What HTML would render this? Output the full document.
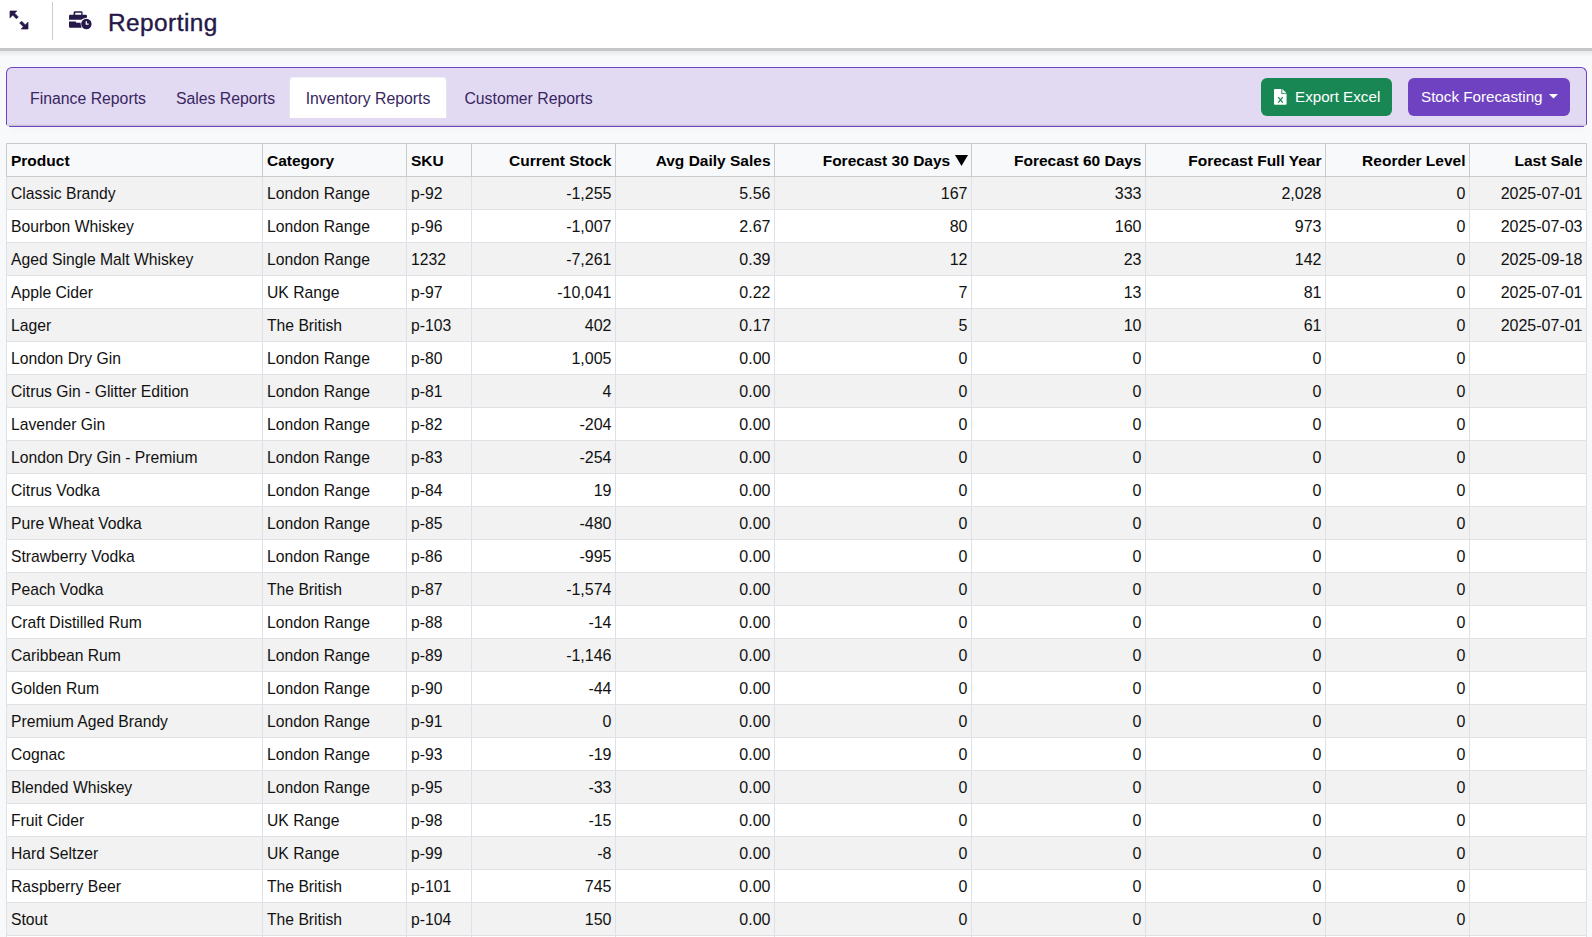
<!DOCTYPE html>
<html><head><meta charset="utf-8">
<style>
*{box-sizing:border-box;margin:0;padding:0}
html,body{width:1592px;height:937px;overflow:hidden}
body{background:#f8f9fa;font-family:"Liberation Sans",sans-serif;color:#212529;position:relative}
.topbar{position:absolute;left:0;top:0;width:1592px;height:51px;background:#fff;border-bottom:3px solid #c4c7ca}
.topshadow{position:absolute;left:0;top:51px;width:1592px;height:6px;background:linear-gradient(#e8e9eb,#f8f9fa)}
.sep{position:absolute;left:52px;top:2px;width:1px;height:38px;background:#cdc8d8}
.title{position:absolute;left:108px;top:7px;font-size:24.4px;letter-spacing:0.45px;line-height:32px;color:#261848;-webkit-text-stroke:0.4px #261848;white-space:nowrap}
.tabbar{position:absolute;left:6px;top:67px;width:1581px;height:58px;background:#e2d9f3;border:1px solid #6f42c1;border-bottom:none;border-radius:6px 6px 1px 1px}
.tbline{position:absolute;left:7px;top:124px;width:1579px;height:2px;background:linear-gradient(#e2d9f3,#c2bdc9)}
.tbbot{position:absolute;left:9px;top:126px;width:1575px;height:1px;background:#6f42c1;border-radius:1px;box-shadow:0 2px 5px rgba(0,0,0,.09)}
.tab{position:absolute;top:9px;height:41px;font-size:15.8px;line-height:43px;color:#38265f;white-space:nowrap;text-align:center}
.tab.active{background:#fff;border-radius:4px 4px 0 0;border:1px solid #e3e5e8;border-top-color:#f4f4f6;border-bottom:none;line-height:41px}
.btn{position:absolute;top:10px;height:38px;border-radius:6px;color:#fff;font-size:15.2px;line-height:38px;white-space:nowrap}
.btn.green{left:1254px;width:131px;background:#198754}
.btn.purple{left:1401px;width:162px;background:#6f42c1}
.table{position:absolute;left:6px;top:143px;width:1581px}
.tr{display:flex;height:33px;border-bottom:1px solid #dee2e6;background:#fff}
.tr.odd{background:#f2f2f2}
.th{display:flex;height:34px;border-top:1px solid #c9cbcd;border-bottom:1px solid #c9cbcd;background:#f8f9fa}
.c{height:32px;border-left:1px solid #dee2e6;padding:4px 4px 0 4px;font-size:15.7px;line-height:25px;white-space:nowrap;overflow:hidden;color:#111}
.th .c{height:32px;border-left:1px solid #c9cbcd;font-weight:bold;font-size:15.5px;color:#000}
.c.r{text-align:right;font-size:16px;padding-right:3.5px}
.th .c.r{font-size:15.5px}
.c.last{border-right:1px solid #dee2e6}
.th .c.last{border-right:1px solid #c9cbcd}
.sort{vertical-align:0px}
</style></head><body>
<div class="topbar">
<svg style="position:absolute;left:0;top:0" width="40" height="40" viewBox="0 0 40 40">
<path fill="#261848" stroke="#261848" stroke-width="0.7" stroke-linejoin="round" d="M10,11 L16.8,11 L14.6,13.2 L18.3,16.9 L16.4,18.8 L12.7,15.1 L10,17.8 Z M28,29 L21.2,29 L23.4,26.8 L19.7,23.1 L21.6,21.2 L25.3,24.9 L28,22.2 Z"/>
</svg>
<div class="sep"></div>
<svg style="position:absolute;left:60px;top:0" width="40" height="40" viewBox="60 0 40 40">
<path fill="#261848" d="M73.6,14.7 L73.6,12.5 Q73.6,11.2 75,11.2 L81.3,11.2 Q82.6,11.2 82.6,12.5 L82.6,14.7 L81.3,14.7 L81.3,12.8 L75.2,12.8 L75.2,14.7 Z M70.2,14.7 L85.8,14.7 Q87,14.7 87,16 L87,17.4 Q83,18.2 81.2,19.8 L69,19.8 L69,16 Q69,14.7 70.2,14.7 Z M69,21.4 L75.6,21.4 L76.4,22.8 L80.6,22.8 Q80.6,25.6 81.6,27.8 L70.2,27.8 Q69,27.8 69,26.6 Z"/>
<circle cx="86.4" cy="24" r="5.2" fill="#261848"/>
<path d="M86.3,21.3 L86.3,24.2 L88.6,24.2" stroke="#fff" stroke-width="1.3" fill="none"/>
</svg>
<div class="title">Reporting</div>
</div>
<div class="topshadow"></div>
<div class="tabbar">
<div class="tab" style="left:9px;width:144px">Finance Reports</div>
<div class="tab" style="left:155px;width:127px">Sales Reports</div>
<div class="tab active" style="left:282px;width:158px">Inventory Reports</div>
<div class="tab" style="left:442px;width:159px">Customer Reports</div>
<div class="btn green">
<svg style="position:absolute;left:13px;top:11px" width="13" height="16" viewBox="0 0 13 16"><path fill="#fff" d="M0,1 Q0,0 1,0 L7.4,0 L7.4,5.1 L12.6,5.1 L12.6,14.8 Q12.6,15.8 11.6,15.8 L1,15.8 Q0,15.8 0,14.8 Z M8.3,0 L12.6,4.3 L8.3,4.3 Z"/><path d="M4.2,8.2 L8.8,13.6 M8.8,8.2 L4.2,13.6" stroke="#198754" stroke-width="1.3"/></svg>
<span style="position:absolute;left:34px;top:0">Export Excel</span>
</div>
<div class="btn purple">
<span style="position:absolute;left:13px;top:0">Stock Forecasting</span>
<svg style="position:absolute;left:141px;top:16px" width="9" height="5" viewBox="0 0 9 5"><path fill="#fff" d="M0,0 L9,0 L4.5,4.5 Z"/></svg>
</div>
</div>
<div class="tbline"></div><div class="tbbot"></div>
<div class="table">
<div class="th"><div class="c l" style="width:256px">Product</div><div class="c l" style="width:144px">Category</div><div class="c l" style="width:65px">SKU</div><div class="c r" style="width:144px">Current Stock</div><div class="c r" style="width:159px">Avg Daily Sales</div><div class="c r" style="width:197px">Forecast 30 Days <svg class="sort" width="13" height="11" viewBox="0 0 13 11"><path d="M0,0 L13,0 L6.5,11 Z" fill="#000"/></svg></div><div class="c r" style="width:174px">Forecast 60 Days</div><div class="c r" style="width:180px">Forecast Full Year</div><div class="c r" style="width:144px">Reorder Level</div><div class="c r last" style="width:118px">Last Sale</div></div>
<div class="tr odd"><div class="c l" style="width:256px">Classic Brandy</div><div class="c l" style="width:144px">London Range</div><div class="c l" style="width:65px">p-92</div><div class="c r" style="width:144px">-1,255</div><div class="c r" style="width:159px">5.56</div><div class="c r" style="width:197px">167</div><div class="c r" style="width:174px">333</div><div class="c r" style="width:180px">2,028</div><div class="c r" style="width:144px">0</div><div class="c r last" style="width:118px">2025-07-01</div></div><div class="tr"><div class="c l" style="width:256px">Bourbon Whiskey</div><div class="c l" style="width:144px">London Range</div><div class="c l" style="width:65px">p-96</div><div class="c r" style="width:144px">-1,007</div><div class="c r" style="width:159px">2.67</div><div class="c r" style="width:197px">80</div><div class="c r" style="width:174px">160</div><div class="c r" style="width:180px">973</div><div class="c r" style="width:144px">0</div><div class="c r last" style="width:118px">2025-07-03</div></div><div class="tr odd"><div class="c l" style="width:256px">Aged Single Malt Whiskey</div><div class="c l" style="width:144px">London Range</div><div class="c l" style="width:65px">1232</div><div class="c r" style="width:144px">-7,261</div><div class="c r" style="width:159px">0.39</div><div class="c r" style="width:197px">12</div><div class="c r" style="width:174px">23</div><div class="c r" style="width:180px">142</div><div class="c r" style="width:144px">0</div><div class="c r last" style="width:118px">2025-09-18</div></div><div class="tr"><div class="c l" style="width:256px">Apple Cider</div><div class="c l" style="width:144px">UK Range</div><div class="c l" style="width:65px">p-97</div><div class="c r" style="width:144px">-10,041</div><div class="c r" style="width:159px">0.22</div><div class="c r" style="width:197px">7</div><div class="c r" style="width:174px">13</div><div class="c r" style="width:180px">81</div><div class="c r" style="width:144px">0</div><div class="c r last" style="width:118px">2025-07-01</div></div><div class="tr odd"><div class="c l" style="width:256px">Lager</div><div class="c l" style="width:144px">The British</div><div class="c l" style="width:65px">p-103</div><div class="c r" style="width:144px">402</div><div class="c r" style="width:159px">0.17</div><div class="c r" style="width:197px">5</div><div class="c r" style="width:174px">10</div><div class="c r" style="width:180px">61</div><div class="c r" style="width:144px">0</div><div class="c r last" style="width:118px">2025-07-01</div></div><div class="tr"><div class="c l" style="width:256px">London Dry Gin</div><div class="c l" style="width:144px">London Range</div><div class="c l" style="width:65px">p-80</div><div class="c r" style="width:144px">1,005</div><div class="c r" style="width:159px">0.00</div><div class="c r" style="width:197px">0</div><div class="c r" style="width:174px">0</div><div class="c r" style="width:180px">0</div><div class="c r" style="width:144px">0</div><div class="c r last" style="width:118px"></div></div><div class="tr odd"><div class="c l" style="width:256px">Citrus Gin - Glitter Edition</div><div class="c l" style="width:144px">London Range</div><div class="c l" style="width:65px">p-81</div><div class="c r" style="width:144px">4</div><div class="c r" style="width:159px">0.00</div><div class="c r" style="width:197px">0</div><div class="c r" style="width:174px">0</div><div class="c r" style="width:180px">0</div><div class="c r" style="width:144px">0</div><div class="c r last" style="width:118px"></div></div><div class="tr"><div class="c l" style="width:256px">Lavender Gin</div><div class="c l" style="width:144px">London Range</div><div class="c l" style="width:65px">p-82</div><div class="c r" style="width:144px">-204</div><div class="c r" style="width:159px">0.00</div><div class="c r" style="width:197px">0</div><div class="c r" style="width:174px">0</div><div class="c r" style="width:180px">0</div><div class="c r" style="width:144px">0</div><div class="c r last" style="width:118px"></div></div><div class="tr odd"><div class="c l" style="width:256px">London Dry Gin - Premium</div><div class="c l" style="width:144px">London Range</div><div class="c l" style="width:65px">p-83</div><div class="c r" style="width:144px">-254</div><div class="c r" style="width:159px">0.00</div><div class="c r" style="width:197px">0</div><div class="c r" style="width:174px">0</div><div class="c r" style="width:180px">0</div><div class="c r" style="width:144px">0</div><div class="c r last" style="width:118px"></div></div><div class="tr"><div class="c l" style="width:256px">Citrus Vodka</div><div class="c l" style="width:144px">London Range</div><div class="c l" style="width:65px">p-84</div><div class="c r" style="width:144px">19</div><div class="c r" style="width:159px">0.00</div><div class="c r" style="width:197px">0</div><div class="c r" style="width:174px">0</div><div class="c r" style="width:180px">0</div><div class="c r" style="width:144px">0</div><div class="c r last" style="width:118px"></div></div><div class="tr odd"><div class="c l" style="width:256px">Pure Wheat Vodka</div><div class="c l" style="width:144px">London Range</div><div class="c l" style="width:65px">p-85</div><div class="c r" style="width:144px">-480</div><div class="c r" style="width:159px">0.00</div><div class="c r" style="width:197px">0</div><div class="c r" style="width:174px">0</div><div class="c r" style="width:180px">0</div><div class="c r" style="width:144px">0</div><div class="c r last" style="width:118px"></div></div><div class="tr"><div class="c l" style="width:256px">Strawberry Vodka</div><div class="c l" style="width:144px">London Range</div><div class="c l" style="width:65px">p-86</div><div class="c r" style="width:144px">-995</div><div class="c r" style="width:159px">0.00</div><div class="c r" style="width:197px">0</div><div class="c r" style="width:174px">0</div><div class="c r" style="width:180px">0</div><div class="c r" style="width:144px">0</div><div class="c r last" style="width:118px"></div></div><div class="tr odd"><div class="c l" style="width:256px">Peach Vodka</div><div class="c l" style="width:144px">The British</div><div class="c l" style="width:65px">p-87</div><div class="c r" style="width:144px">-1,574</div><div class="c r" style="width:159px">0.00</div><div class="c r" style="width:197px">0</div><div class="c r" style="width:174px">0</div><div class="c r" style="width:180px">0</div><div class="c r" style="width:144px">0</div><div class="c r last" style="width:118px"></div></div><div class="tr"><div class="c l" style="width:256px">Craft Distilled Rum</div><div class="c l" style="width:144px">London Range</div><div class="c l" style="width:65px">p-88</div><div class="c r" style="width:144px">-14</div><div class="c r" style="width:159px">0.00</div><div class="c r" style="width:197px">0</div><div class="c r" style="width:174px">0</div><div class="c r" style="width:180px">0</div><div class="c r" style="width:144px">0</div><div class="c r last" style="width:118px"></div></div><div class="tr odd"><div class="c l" style="width:256px">Caribbean Rum</div><div class="c l" style="width:144px">London Range</div><div class="c l" style="width:65px">p-89</div><div class="c r" style="width:144px">-1,146</div><div class="c r" style="width:159px">0.00</div><div class="c r" style="width:197px">0</div><div class="c r" style="width:174px">0</div><div class="c r" style="width:180px">0</div><div class="c r" style="width:144px">0</div><div class="c r last" style="width:118px"></div></div><div class="tr"><div class="c l" style="width:256px">Golden Rum</div><div class="c l" style="width:144px">London Range</div><div class="c l" style="width:65px">p-90</div><div class="c r" style="width:144px">-44</div><div class="c r" style="width:159px">0.00</div><div class="c r" style="width:197px">0</div><div class="c r" style="width:174px">0</div><div class="c r" style="width:180px">0</div><div class="c r" style="width:144px">0</div><div class="c r last" style="width:118px"></div></div><div class="tr odd"><div class="c l" style="width:256px">Premium Aged Brandy</div><div class="c l" style="width:144px">London Range</div><div class="c l" style="width:65px">p-91</div><div class="c r" style="width:144px">0</div><div class="c r" style="width:159px">0.00</div><div class="c r" style="width:197px">0</div><div class="c r" style="width:174px">0</div><div class="c r" style="width:180px">0</div><div class="c r" style="width:144px">0</div><div class="c r last" style="width:118px"></div></div><div class="tr"><div class="c l" style="width:256px">Cognac</div><div class="c l" style="width:144px">London Range</div><div class="c l" style="width:65px">p-93</div><div class="c r" style="width:144px">-19</div><div class="c r" style="width:159px">0.00</div><div class="c r" style="width:197px">0</div><div class="c r" style="width:174px">0</div><div class="c r" style="width:180px">0</div><div class="c r" style="width:144px">0</div><div class="c r last" style="width:118px"></div></div><div class="tr odd"><div class="c l" style="width:256px">Blended Whiskey</div><div class="c l" style="width:144px">London Range</div><div class="c l" style="width:65px">p-95</div><div class="c r" style="width:144px">-33</div><div class="c r" style="width:159px">0.00</div><div class="c r" style="width:197px">0</div><div class="c r" style="width:174px">0</div><div class="c r" style="width:180px">0</div><div class="c r" style="width:144px">0</div><div class="c r last" style="width:118px"></div></div><div class="tr"><div class="c l" style="width:256px">Fruit Cider</div><div class="c l" style="width:144px">UK Range</div><div class="c l" style="width:65px">p-98</div><div class="c r" style="width:144px">-15</div><div class="c r" style="width:159px">0.00</div><div class="c r" style="width:197px">0</div><div class="c r" style="width:174px">0</div><div class="c r" style="width:180px">0</div><div class="c r" style="width:144px">0</div><div class="c r last" style="width:118px"></div></div><div class="tr odd"><div class="c l" style="width:256px">Hard Seltzer</div><div class="c l" style="width:144px">UK Range</div><div class="c l" style="width:65px">p-99</div><div class="c r" style="width:144px">-8</div><div class="c r" style="width:159px">0.00</div><div class="c r" style="width:197px">0</div><div class="c r" style="width:174px">0</div><div class="c r" style="width:180px">0</div><div class="c r" style="width:144px">0</div><div class="c r last" style="width:118px"></div></div><div class="tr"><div class="c l" style="width:256px">Raspberry Beer</div><div class="c l" style="width:144px">The British</div><div class="c l" style="width:65px">p-101</div><div class="c r" style="width:144px">745</div><div class="c r" style="width:159px">0.00</div><div class="c r" style="width:197px">0</div><div class="c r" style="width:174px">0</div><div class="c r" style="width:180px">0</div><div class="c r" style="width:144px">0</div><div class="c r last" style="width:118px"></div></div><div class="tr odd"><div class="c l" style="width:256px">Stout</div><div class="c l" style="width:144px">The British</div><div class="c l" style="width:65px">p-104</div><div class="c r" style="width:144px">150</div><div class="c r" style="width:159px">0.00</div><div class="c r" style="width:197px">0</div><div class="c r" style="width:174px">0</div><div class="c r" style="width:180px">0</div><div class="c r" style="width:144px">0</div><div class="c r last" style="width:118px"></div></div><div class="tr"><div class="c l" style="width:256px">Spiced Rum</div><div class="c l" style="width:144px">London Range</div><div class="c l" style="width:65px">p-105</div><div class="c r" style="width:144px">0</div><div class="c r" style="width:159px">0.00</div><div class="c r" style="width:197px">0</div><div class="c r" style="width:174px">0</div><div class="c r" style="width:180px">0</div><div class="c r" style="width:144px">0</div><div class="c r last" style="width:118px"></div></div>
</div>
</body></html>
